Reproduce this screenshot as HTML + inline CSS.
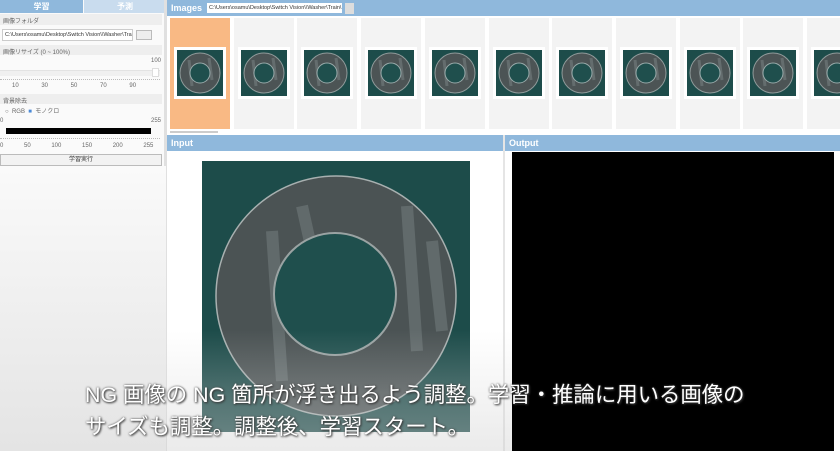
<!DOCTYPE html>
<html><head><meta charset="utf-8"><style>
*{margin:0;padding:0;box-sizing:border-box}
body{width:840px;height:451px;overflow:hidden;background:#fff;font-family:"Liberation Sans","Noto Sans CJK JP",sans-serif;position:relative}
.abs{position:absolute}
.lbl{font-size:6px;color:#666}
.hdr{background:#8fb8dc;color:#fff;font-weight:bold;font-size:9px}
.tile{position:absolute;top:18px;width:60px;height:111px;background:#f3f3f3}
.tile .im{position:absolute;left:4px;top:29px;width:52px;height:52px;background:#fff;padding:3px}
.sub{position:absolute;left:85px;color:#fff;font-size:21.4px;white-space:nowrap;text-shadow:1px 1px 2px #333,0 0 2px #555}
</style></head><body>
<div class="abs" style="left:0;top:0;width:166px;height:451px;background:#fafafa"></div>
<div class="abs hdr" style="left:0;top:0;width:83px;height:13px;text-align:center;line-height:13px;font-size:8px">学習</div>
<div class="abs" style="left:84px;top:0;width:82px;height:13px;background:#c9dcee;color:#fff;text-align:center;line-height:13px;font-size:8px;font-weight:bold">予測</div>
<div class="abs" style="left:0;top:14px;width:162px;height:11px;background:#eee"></div>
<div class="abs lbl" style="left:3px;top:16px">画像フォルダ</div>
<div class="abs" style="left:2px;top:29px;width:131px;height:12px;border:1px solid #ccc;background:#fff;font-size:5.5px;line-height:10px;padding-left:2px;color:#333;overflow:hidden;white-space:nowrap">C:\Users\osamu\Desktop\Switch Vision\\Washer\Train</div>
<div class="abs" style="left:136px;top:30px;width:16px;height:10px;border:1px solid #bbb;background:#eee"></div>
<div class="abs" style="left:0;top:45px;width:162px;height:10px;background:#eee"></div>
<div class="abs lbl" style="left:3px;top:47px">画像リサイズ (0 ~ 100%)</div>
<div class="abs lbl" style="left:151px;top:58px">100</div>
<div class="abs" style="left:0;top:70px;width:160px;height:6px;background:#f0f0f0;border-top:1px solid #e3e3e3"></div>
<div class="abs" style="left:152px;top:68px;width:7px;height:9px;background:#fff;border:1px solid #ddd"></div>
<div class="abs" style="left:0;top:79px;width:160px;height:3px;border-top:1px dotted #bbb"></div>
<div class="abs lbl" style="left:12px;top:83px;word-spacing:21px">10 30 50 70 90</div>
<div class="abs" style="left:0;top:94px;width:162px;height:10px;background:#eee"></div>
<div class="abs lbl" style="left:3px;top:96px">背景除去</div>
<div class="abs lbl" style="left:5px;top:106px">○ &nbsp;RGB &nbsp;<span style="color:#4a8ad8">■</span> &nbsp;モノクロ</div>
<div class="abs lbl" style="left:0;top:118px">0</div>
<div class="abs lbl" style="left:151px;top:118px">255</div>
<div class="abs" style="left:6px;top:128px;width:145px;height:6px;background:#000"></div>
<div class="abs" style="left:0;top:138px;width:160px;height:3px;border-top:1px dotted #bbb"></div>
<div class="abs lbl" style="left:0;top:143px;word-spacing:19px">0 50 100 150 200 255</div>
<div class="abs" style="left:0;top:154px;width:162px;height:12px;border:1px solid #bbb;background:#f2f2f2;font-size:6px;text-align:center;line-height:10px;color:#333;z-index:2">学習実行</div>
<div class="abs" style="left:164px;top:0;width:3px;height:451px;background:#e0e0e0"></div>
<div class="abs hdr" style="left:167px;top:0;width:673px;height:16px;padding-left:4px;line-height:16px;font-size:9px">Images</div>
<div class="abs" style="left:207px;top:3px;width:135px;height:10px;background:#fff;font-size:5.5px;line-height:10px;padding-left:2px;color:#333;overflow:hidden;white-space:nowrap">C:\Users\osamu\Desktop\Switch Vision\\Washer\Train\</div>
<div class="abs" style="left:345px;top:3px;width:9px;height:11px;background:#ddd"></div>
<div class="abs" style="left:167px;top:16px;width:673px;height:119px;background:#fff"></div>
<div id="tiles"></div>
<div class="abs" style="left:170px;top:131px;width:48px;height:2px;background:#ccc"></div>
<div class="abs hdr" style="left:167px;top:135px;width:336px;height:16px;padding-left:4px;line-height:16px">Input</div>
<div class="abs hdr" style="left:505px;top:135px;width:335px;height:16px;padding-left:4px;line-height:16px">Output</div>
<div class="abs" style="left:503px;top:135px;width:2px;height:316px;background:#e5e5e5"></div>
<div class="abs" style="left:512px;top:152px;width:322px;height:299px;background:#000"></div>
<svg class="abs" style="left:202px;top:161px" width="268" height="271">
<rect width="268" height="271" fill="#1d4c4a"/>
<circle cx="134" cy="135" r="120" fill="#4b5354" stroke="#a8b0b0" stroke-width="1.5"/>
<path d="M70 70 L80 220 M100 45 L110 90 M205 45 L215 190 M230 80 L240 170" stroke="#7d8788" stroke-width="12" opacity="0.45"/>
<circle cx="133" cy="133" r="61" fill="#1f4f4d" stroke="#9aa3a3" stroke-width="2"/>
</svg>
<div class="abs" style="left:0;top:330px;width:512px;height:121px;background:linear-gradient(to bottom,rgba(220,220,220,0),rgba(215,215,215,0.3) 60%,rgba(210,210,210,0.45));pointer-events:none"></div>
<div class="abs" style="left:0;top:166px;width:166px;height:285px;background:linear-gradient(to bottom,#fafafa,#e4e4e4)"></div>
<div class="sub" style="top:378px">NG 画像の NG 箇所が浮き出るよう調整。学習・推論に用いる画像の</div>
<div class="sub" style="top:410px">サイズも調整。調整後、学習スタート。</div>
<script>
var h='';for(var i=0;i<11;i++){var x=170+i*63.7;h+='<div class="tile" style="left:'+x+'px;'+(i==0?'background:#f9b984':'')+'"><div class="im"><svg width="46" height="46"><rect width="46" height="46" fill="#1d4c4a"/><circle cx="23" cy="23" r="20" fill="#4c5455" stroke="#8f9a9a" stroke-width="1"/><path d="M12 10 L15 36 M32 8 L35 30" stroke="#7d8788" stroke-width="3" opacity="0.5"/><circle cx="23" cy="23" r="10" fill="#1f4f4d" stroke="#9aa"/></svg></div></div>';}
document.getElementById('tiles').innerHTML=h;
</script>
</body></html>
